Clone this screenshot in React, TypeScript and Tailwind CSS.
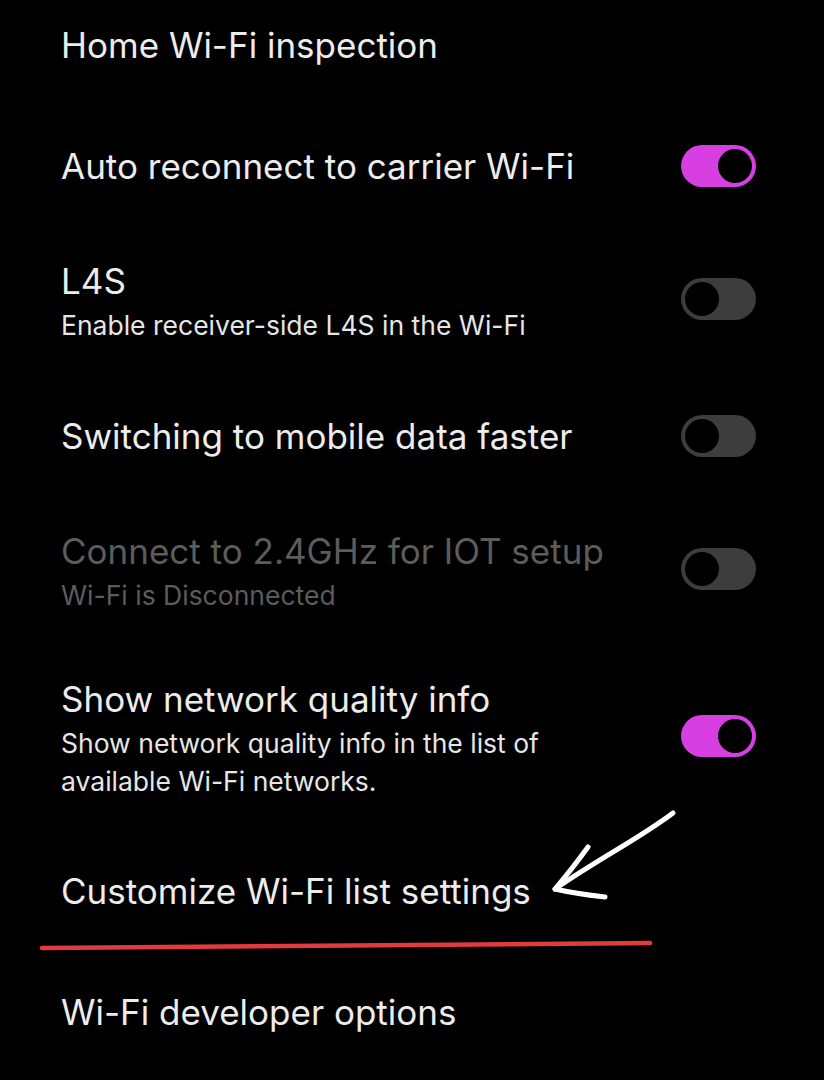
const rows = [
  { title: "Home Wi-Fi inspection", mt: "mt-[25px]" },
  { title: "Auto reconnect to carrier Wi-Fi", toggle: "on", mt: "mt-[80px]" },
  { title: "L4S", sub: "Enable receiver-side L4S in the Wi-Fi", toggle: "off", mt: "mt-[74px]" },
  { title: "Switching to mobile data faster", toggle: "off", mt: "mt-[71px]" },
  { title: "Connect to 2.4GHz for IOT setup", sub: "Wi-Fi is Disconnected", toggle: "off", disabled: true, mt: "mt-[74px]" },
  {
    title: "Show network quality info",
    sub: "Show network quality info in the list of available Wi-Fi networks.",
    toggle: "on",
    mt: "mt-[65px]",
  },
  { title: "Customize Wi-Fi list settings", mt: "mt-[71px]" },
  { title: "Wi-Fi developer options", mt: "mt-[81px]" },
];

function Toggle({ on, raised }: { on: boolean; raised?: boolean }) {
  return (
    <div
      className={
        "flex h-[42px] w-[75px] shrink-0 items-center rounded-full px-[4px] " +
        (on ? "justify-end bg-[#d83fe2]" : "justify-start bg-[#3d3d3d]") +
        (raised ? " mb-[8px]" : "")
      }
    >
      <div className="h-[34px] w-[34px] rounded-full bg-black" />
    </div>
  );
}

export default function App() {
  return (
    <div className="relative h-[1080px] w-[824px] overflow-hidden bg-black font-['Inter',sans-serif]">
      <div className="flex flex-col pl-[61px] pr-[68px]">
        {rows.map((r) => (
          <div key={r.title} className={"flex items-center justify-between " + r.mt}>
            <div className="w-[560px]">
              <div
                className={
                  "text-[35px] leading-[40px] " + (r.disabled ? "text-[#5c5c5c]" : "text-[#ececec]")
                }
              >
                {r.title}
              </div>
              {r.sub && (
                <div
                  className={
                    "mt-[5px] text-[26.5px] leading-[38px] " +
                    (r.disabled ? "text-[#5c5c5c]" : "text-[#e6e6e6]")
                  }
                >
                  {r.sub}
                </div>
              )}
            </div>
            {r.toggle && <Toggle on={r.toggle === "on"} raised={!!r.sub} />}
          </div>
        ))}
      </div>

      {/* hand drawn annotations */}
      <svg className="absolute left-0 top-0" width="824" height="1080" fill="none">
        <path d="M42 948 L650 943" stroke="#e23b3e" strokeWidth="4.5" strokeLinecap="round" />
        <path
          d="M673 813 C640 838 600 858 555 889"
          stroke="#ffffff"
          strokeWidth="5"
          strokeLinecap="round"
        />
        <path
          d="M588 847 C575 865 566 876 555 889 C572 893 588 895 605 897"
          stroke="#ffffff"
          strokeWidth="5"
          strokeLinecap="round"
          strokeLinejoin="round"
        />
      </svg>
    </div>
  );
}
